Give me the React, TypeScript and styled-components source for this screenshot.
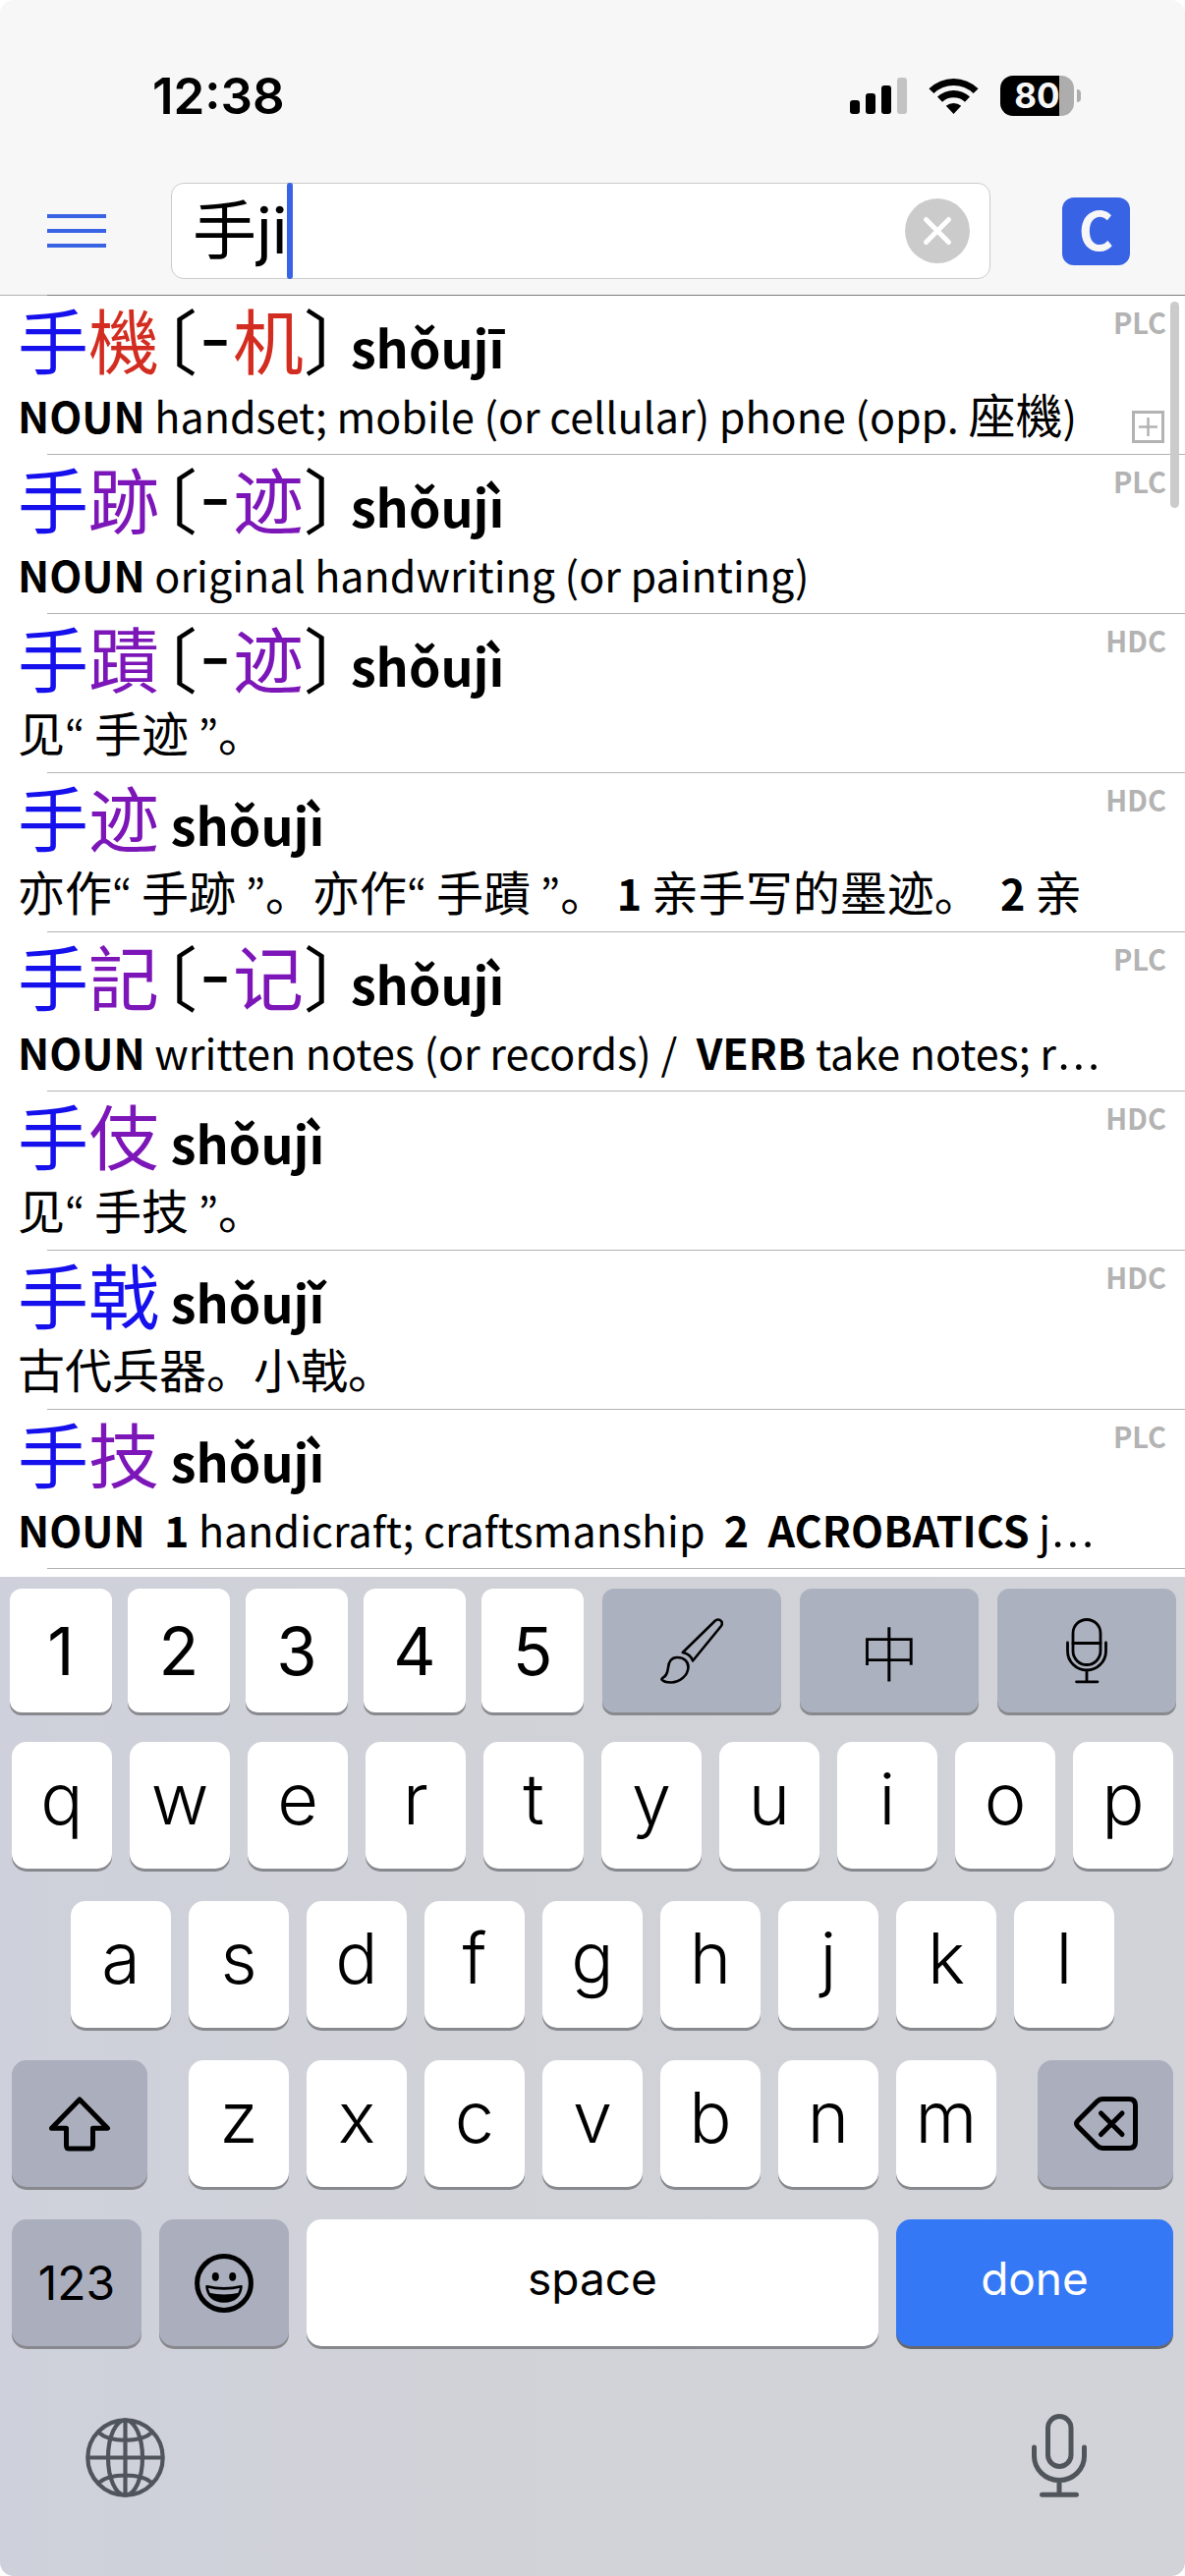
import React, { useState } from "react";
import styled, { createGlobalStyle } from "styled-components";

const LATIN = `"Noto Sans CJK JP", "Noto Sans", sans-serif`;
const HAN = `"Noto Sans CJK SC", "Noto Sans CJK JP", sans-serif`;
const SYSTEM = `Inter, "Noto Sans CJK SC", sans-serif`;

const tones = { 1: "#d22d20", 3: "#1510ec", 4: "#7c16b8" };

const GlobalStyle = createGlobalStyle`
  * { box-sizing: border-box; }
  body { margin: 0; background: #fff; }
  button { border: 0; padding: 0; margin: 0; background: none; color: inherit; font: inherit; cursor: pointer; }
`;

const Screen = styled.div`
  display: flex;
  flex-direction: column;
  min-height: 100vh;
  border-radius: 14px;
  overflow: hidden;
  background: #fff;
  color: #000;
  font-family: ${LATIN};
`;

const Header = styled.header`
  background: #f7f7f7;
`;

const StatusBar = styled.div`
  display: flex;
  align-items: center;
  justify-content: space-between;
  padding: 72px 106px 63px 155px;
`;

const Clock = styled.time`
  font: 600 51px/51px ${SYSTEM};
`;

const StatusIcons = styled.div`
  display: flex;
  align-items: center;
  gap: 22px;
`;

const Battery = styled.div`
  display: flex;
  align-items: center;
  gap: 3px;
`;

const BatteryBody = styled.div`
  display: flex;
  align-items: center;
  justify-content: center;
  width: 75px;
  height: 41px;
  border-radius: 13px;
  background: linear-gradient(to right, #000 80%, #adadad 80%);
  color: #f7f7f7;
  font: 700 35px/41px ${SYSTEM};
`;

const BatteryCap = styled.div`
  width: 4px;
  height: 13px;
  border-radius: 0 6px 6px 0;
  background: #adadad;
`;

const Toolbar = styled.div`
  display: flex;
  align-items: center;
  padding: 0 56px 16px 48px;
`;

const MenuButton = styled.button`
  display: flex;
  flex: none;
  flex-direction: column;
  gap: 11px;
  width: 60px;
  margin-right: 66px;
`;

const MenuBar = styled.span`
  width: 100%;
  height: 4px;
  background: #3863e4;
`;

const SearchField = styled.div`
  position: relative;
  display: flex;
  align-items: center;
  flex: 1;
  min-width: 0;
  height: 98px;
  margin-right: 73px;
  padding: 0 20px 0 21px;
  border: 1px solid #cbcbcb;
  border-radius: 13px;
  background: #fff;
`;

const SearchInput = styled.input`
  flex: 1;
  min-width: 0;
  height: 96px;
  padding: 0;
  border: 0;
  outline: 0;
  background: none;
  color: #000;
  font: 400 65px/96px ${SYSTEM};
`;

const Caret = styled.span`
  position: absolute;
  top: -1px;
  bottom: -1px;
  left: 117px;
  width: 6px;
  border-radius: 3px;
  background: #3863e4;
`;

const ClearButton = styled.button`
  display: flex;
  align-items: center;
  justify-content: center;
  flex: none;
  width: 66px;
  height: 66px;
  border-radius: 50%;
  background: #cbcbcb;
`;

const ModeButton = styled.button`
  display: flex;
  align-items: center;
  justify-content: center;
  flex: none;
  width: 69px;
  height: 69px;
  padding-bottom: 7px;
  border-radius: 12px;
  background: #3863e4;
  color: #f7f7f7;
  font: 700 54px/54px ${LATIN};
`;

const HeaderRule = styled.div`
  height: 1px;
  background: linear-gradient(to right, #b2b2b2 48px, #7f7f7f 48px);
`;

const Results = styled.main`
  position: relative;
  padding-bottom: 8px;
`;

const EntryList = styled.ul`
  margin: 0;
  padding: 0;
  list-style: none;
`;

const Entry = styled.li`
  display: grid;
  grid-template-columns: minmax(0, 1fr) auto;
  grid-template-rows: 85px 76px 1px;
  padding-left: 18px;
`;

const Headword = styled.h2`
  margin: 0;
  white-space: pre;
  font: 400 72px/85px ${HAN};
`;

const Tone = styled.span<{ $tone: 1 | 3 | 4 }>`
  color: ${(p) => tones[p.$tone]};
`;

const Bracket = styled.span<{ $open?: boolean }>`
  padding-left: ${(p) => (p.$open ? 3 : 0)}px;
  font-feature-settings: "halt";
`;

const Dash = styled.span`
  display: inline-block;
  width: 36px;
  text-align: center;
  font: 400 72px/72px ${SYSTEM};
  font-feature-settings: "case";
`;

const Pinyin = styled.span`
  font: 700 52px/52px ${LATIN};
`;

const Definition = styled.p`
  margin: 0;
  white-space: pre;
  font: 400 43px/72px ${LATIN};
`;

const Han = styled.span`
  font: 400 48px/48px ${HAN};
`;

const Dots = styled.span`
  font: 300 54px/54px ${SYSTEM};
`;

const Side = styled.div`
  display: flex;
  flex-direction: column;
  align-items: flex-end;
  justify-content: space-between;
  grid-row: 1 / 3;
  grid-column: 2;
  padding: 4px 19px 11px 0;
`;

const Source = styled.span`
  color: #b3b3b3;
  font: 700 29px/44px ${LATIN};
`;

const ExpandButton = styled.button`
  height: 33px;
  margin-right: 2px;
`;

const Separator = styled.div`
  grid-column: 1 / 3;
  margin-left: 30px;
  background: #b2b2b2;
`;

const ScrollThumb = styled.div`
  position: absolute;
  top: 6px;
  right: 6px;
  width: 9px;
  height: 210px;
  border-radius: 5px;
  background: #cbcbcb;
`;

const Keyboard = styled.section`
  display: flex;
  flex-direction: column;
  flex: 1;
  padding-top: 12px;
  background: linear-gradient(to right, #ced1db, #d1d2d8 40%, #d2d3d9);
  font-family: ${SYSTEM};
`;

const ShortcutRow = styled.div`
  display: flex;
  gap: 19px;
  padding: 0 9px 0 10px;
  margin-bottom: 30px;
`;

const KeyGroup = styled.div<{ $gap: number; $grow?: number }>`
  display: flex;
  flex: ${(p) => p.$grow ?? 1} 1 0;
  gap: ${(p) => p.$gap}px;
`;

const KeyRow = styled.div<{ $inset?: number; $gap?: number }>`
  display: flex;
  gap: ${(p) => p.$gap ?? 18}px;
  padding: 0 ${(p) => p.$inset ?? 12}px;
  margin-bottom: 33px;
`;

const Key = styled.button<{ $grow?: number }>`
  display: flex;
  align-items: center;
  justify-content: center;
  flex: ${(p) => p.$grow ?? 1} 1 0;
  min-width: 0;
  height: 129px;
  border-radius: 15px;
  background: #fff;
  color: #000;
  box-shadow: 0 3px 0 #88898e;
`;

const LetterKey = styled(Key)`
  padding-bottom: 15px;
  font-size: 72px;
  font-weight: 300;
`;

const DigitKey = styled(Key)`
  height: 126px;
  border-radius: 12px;
  font-size: 67px;
`;

const ToolKey = styled(Key)`
  height: 126px;
  border-radius: 12px;
  background: #abb1be;
  font-family: ${HAN};
  font-size: 60px;
  font-weight: 300;
`;

const ModifierKey = styled(Key)`
  background: #aaaebd;
  font-size: 48px;
`;

const WordKey = styled(Key)<{ $primary?: boolean }>`
  padding-bottom: 10px;
  background: ${(p) => (p.$primary ? "#3478f6" : "#fff")};
  color: ${(p) => (p.$primary ? "#fff" : "#000")};
  box-shadow: 0 3px 0 ${(p) => (p.$primary ? "#66686e" : "#88898e")};
  font-size: 46px;
`;

const BottomBar = styled.div`
  display: flex;
  align-items: flex-end;
  justify-content: space-between;
  padding: 36px 100px 79px 87px;
`;

const BarButton = styled.button`
  display: flex;
  color: #50555c;
`;

const SignalIcon = () => (
  <svg width="58" height="37" viewBox="0 0 58 37">
    <rect x="0" y="23" width="10" height="14" rx="3" />
    <rect x="16" y="16" width="10" height="21" rx="3" />
    <rect x="32" y="8" width="10" height="29" rx="3" />
    <rect x="48" y="0" width="10" height="37" rx="3" fill="#c3c3c3" />
  </svg>
);

const WifiIcon = () => (
  <svg width="51" height="37" viewBox="0 0 51 37">
    <path d="M0.4 11.2 A36 36 0 0 1 50.6 11.2 L45.6 16 A29 29 0 0 0 5.4 16 Z" />
    <path d="M9 19.6 A24 24 0 0 1 42 19.6 L37 24.8 A17 17 0 0 0 14 24.8 Z" />
    <path d="M17.8 28.8 A12 12 0 0 1 33.2 28.8 L25.5 37 Z" />
  </svg>
);

const CloseIcon = () => (
  <svg width="32" height="32" viewBox="0 0 32 32" stroke="#fff" strokeWidth="5" strokeLinecap="round">
    <path d="M4.5 4.5 L27.5 27.5 M27.5 4.5 L4.5 27.5" />
  </svg>
);

const PlusBoxIcon = () => (
  <svg width="33" height="33" viewBox="0 0 33 33" fill="none" stroke="#b3b3b3" strokeWidth="3">
    <rect x="1.5" y="1.5" width="30" height="30" />
    <path d="M16.5 7 V26 M7 16.5 H26" strokeWidth="2.5" />
  </svg>
);

const BrushIcon = () => (
  <svg width="64" height="67" viewBox="0 0 64 67" fill="none" stroke="#000" strokeWidth="2.6" strokeLinejoin="round">
    <path d="M22.8 35 L55.5 3 C57.5 1 60.2 1 61.8 2.8 C63.2 4.4 63.1 6.5 61.8 8.2 L33 43.5 C31.5 38.5 27.5 36 22.8 35 Z" />
    <path d="M17 40 C24 40 28.5 44 28.5 50 C28 59 19.5 65.3 11 65.5 C7 65.5 3 64.6 1.5 62.5 C1 60.4 4 61 6 57.5 C9 52.4 7 47.2 10.5 43 C12.2 41 14.5 40 17 40 Z" />
  </svg>
);

const StudioMicIcon = () => (
  <svg width="42" height="67" viewBox="0 0 42 67" fill="none" stroke="#000" strokeWidth="2.8" strokeLinecap="round">
    <rect x="7" y="1.5" width="28" height="46" rx="14" />
    <path d="M7 25.5 H35 M1.5 25 V33.5 A19.5 19.5 0 0 0 40.5 33.5 V25 M21 53 V64.5 M10.5 64.8 H32" />
  </svg>
);

const ShiftIcon = () => (
  <svg width="64" height="56" viewBox="0 0 64 56" fill="none" stroke="#000" strokeWidth="5" strokeLinejoin="round">
    <path d="M32 3 L60.5 32.2 H45.5 V50 Q45.5 53 42.5 53 H21.5 Q18.5 53 18.5 50 V32.2 H3.5 Z" />
  </svg>
);

const DeleteIcon = () => (
  <svg width="65" height="55" viewBox="0 0 65 55" fill="none" stroke="#000" strokeWidth="5" strokeLinecap="round" strokeLinejoin="round">
    <path d="M29 2.5 H56 Q62.5 2.5 62.5 9 V46 Q62.5 52.5 56 52.5 H29 Q26 52.5 23.5 50 L4 30.5 Q1.2 27.5 4 24.5 L23.5 5 Q26 2.5 29 2.5 Z" />
    <path d="M27.5 17 L49 38.5 M49 17 L27.5 38.5" />
  </svg>
);

const EmojiIcon = () => (
  <svg width="60" height="60" viewBox="0 0 60 60" fill="none" stroke="#000">
    <circle cx="30" cy="30" r="27.4" strokeWidth="5" />
    <ellipse cx="21.3" cy="23.3" rx="3.5" ry="4.4" fill="#000" stroke="none" />
    <ellipse cx="38.7" cy="23.3" rx="3.5" ry="4.4" fill="#000" stroke="none" />
    <path d="M12.5 33.2 Q30 37.5 47.5 33.2 Q46 48.3 30 48.5 Q14 48.3 12.5 33.2 Z" strokeWidth="2.6" strokeLinejoin="round" />
    <path d="M14.5 39.8 Q30 43 45.5 39.8 Q42 49 30 49 Q18 49 14.5 39.8 Z" fill="#000" stroke="none" />
  </svg>
);

const GlobeIcon = () => (
  <svg width="81" height="81" viewBox="0 0 81 81" fill="none" stroke="currentColor" strokeWidth="4.2">
    <circle cx="40.5" cy="40.5" r="38.2" />
    <ellipse cx="40.5" cy="40.5" rx="17.5" ry="38.2" />
    <path d="M40.5 2 V79 M2 40.5 H79 M13.5 15 Q22 22.8 40.5 22.8 Q59 22.8 67.5 15 M13.5 66 Q22 58.5 40.5 58.5 Q59 58.5 67.5 66" />
  </svg>
);

const MicIcon = () => (
  <svg width="56" height="85" viewBox="0 0 56 85" fill="none" stroke="currentColor" strokeWidth="5" strokeLinecap="round">
    <rect x="16.5" y="2.5" width="23.5" height="51" rx="11.75" />
    <path d="M2.5 34 V43 A25.5 24.5 0 0 0 53.5 43 V34 M28 68 V82 M10.5 82.3 H45.5" />
  </svg>
);

type ToneNumber = 1 | 3 | 4;
interface EntryData {
  word: [string, ToneNumber];
  simplified?: string;
  pinyin: string;
  source: string;
  expandable?: boolean;
  definition: React.ReactNode;
}

const entries: EntryData[] = [
  {
    word: ["機", 1], simplified: "机", pinyin: "shǒujī", source: "PLC", expandable: true,
    definition: <><b>NOUN</b>{" handset; mobile (or cellular) phone (opp. "}<Han>座機</Han>)</>,
  },
  {
    word: ["跡", 4], simplified: "迹", pinyin: "shǒujì", source: "PLC",
    definition: <><b>NOUN</b>{" original handwriting (or painting)"}</>,
  },
  {
    word: ["蹟", 4], simplified: "迹", pinyin: "shǒujì", source: "HDC",
    definition: <><Han>见</Han>{"“ "}<Han>手迹</Han>{" ”"}<Han>。</Han></>,
  },
  {
    word: ["迹", 4], pinyin: "shǒujì", source: "HDC",
    definition: (
      <>
        <Han>亦作</Han>{"“ "}<Han>手跡</Han>{" ”"}<Han>。亦作</Han>{"“ "}<Han>手蹟</Han>{" ”"}<Han>。</Han>
        {" "}<b>1</b>{" "}<Han>亲手写的墨迹。</Han>{"  "}<b>2</b>{" "}<Han>亲</Han>
      </>
    ),
  },
  {
    word: ["記", 4], simplified: "记", pinyin: "shǒujì", source: "PLC",
    definition: <><b>NOUN</b>{" written notes (or records) /  "}<b>VERB</b>{" take notes; r"}<Dots>…</Dots></>,
  },
  {
    word: ["伎", 4], pinyin: "shǒujì", source: "HDC",
    definition: <><Han>见</Han>{"“ "}<Han>手技</Han>{" ”"}<Han>。</Han></>,
  },
  {
    word: ["戟", 3], pinyin: "shǒujǐ", source: "HDC",
    definition: <Han>古代兵器。小戟。</Han>,
  },
  {
    word: ["技", 4], pinyin: "shǒujì", source: "PLC",
    definition: (
      <><b>NOUN</b>{"  "}<b>1</b>{" handicraft; craftsmanship  "}<b>2</b>{"  "}<b>ACROBATICS</b>{" j"}<Dots>…</Dots></>
    ),
  },
];

function EntryRow({ entry }: { entry: EntryData }) {
  const [char, tone] = entry.word;
  return (
    <Entry>
      <Headword>
        <Tone $tone={3}>手</Tone>
        <Tone $tone={tone}>{char}</Tone>
        {entry.simplified && (
          <>
            <Bracket $open>〔</Bracket>
            <Dash>-</Dash>
            <Tone $tone={tone}>{entry.simplified}</Tone>
            <Bracket>〕</Bracket>
          </>
        )}
        <Pinyin>{" " + entry.pinyin}</Pinyin>
      </Headword>
      <Definition>{entry.definition}</Definition>
      <Side>
        <Source>{entry.source}</Source>
        {entry.expandable && (
          <ExpandButton aria-label="Expand entry"><PlusBoxIcon /></ExpandButton>
        )}
      </Side>
      <Separator />
    </Entry>
  );
}

const letters = (row: string) => row.split("").map((l) => <LetterKey key={l}>{l}</LetterKey>);

export default function App() {
  const [query, setQuery] = useState("手ji");
  return (
    <>
      <GlobalStyle />
      <Screen>
        <Header>
          <StatusBar>
            <Clock>12:38</Clock>
            <StatusIcons>
              <SignalIcon />
              <WifiIcon />
              <Battery>
                <BatteryBody>80</BatteryBody>
                <BatteryCap />
              </Battery>
            </StatusIcons>
          </StatusBar>
          <Toolbar>
            <MenuButton aria-label="Menu"><MenuBar /><MenuBar /><MenuBar /></MenuButton>
            <SearchField>
              <SearchInput aria-label="Search" value={query} onChange={(e) => setQuery(e.target.value)} />
              <Caret />
              <ClearButton aria-label="Clear search" onClick={() => setQuery("")}><CloseIcon /></ClearButton>
            </SearchField>
            <ModeButton aria-label="Chinese search mode">C</ModeButton>
          </Toolbar>
          <HeaderRule />
        </Header>

        <Results>
          <EntryList>
            {entries.map((entry, i) => <EntryRow key={i} entry={entry} />)}
          </EntryList>
          <ScrollThumb />
        </Results>

        <Keyboard aria-label="Keyboard">
          <ShortcutRow>
            <KeyGroup $gap={16}>
              {["1", "2", "3", "4", "5"].map((d) => <DigitKey key={d}>{d}</DigitKey>)}
            </KeyGroup>
            <KeyGroup $gap={19}>
              <ToolKey aria-label="Handwriting"><BrushIcon /></ToolKey>
              <ToolKey>中</ToolKey>
              <ToolKey aria-label="Voice input"><StudioMicIcon /></ToolKey>
            </KeyGroup>
          </ShortcutRow>
          <KeyRow>{letters("qwertyuiop")}</KeyRow>
          <KeyRow $inset={72}>{letters("asdfghjkl")}</KeyRow>
          <KeyRow $gap={42}>
            <ModifierKey $grow={138} aria-label="Shift"><ShiftIcon /></ModifierKey>
            <KeyGroup $gap={18} $grow={822}>{letters("zxcvbnm")}</KeyGroup>
            <ModifierKey $grow={138} aria-label="Delete"><DeleteIcon /></ModifierKey>
          </KeyRow>
          <KeyRow>
            <ModifierKey $grow={132}>123</ModifierKey>
            <ModifierKey $grow={132} aria-label="Emoji"><EmojiIcon /></ModifierKey>
            <WordKey $grow={582}>space</WordKey>
            <WordKey $grow={282} $primary>done</WordKey>
          </KeyRow>
          <BottomBar>
            <BarButton aria-label="Next keyboard"><GlobeIcon /></BarButton>
            <BarButton aria-label="Dictation"><MicIcon /></BarButton>
          </BottomBar>
        </Keyboard>
      </Screen>
    </>
  );
}
